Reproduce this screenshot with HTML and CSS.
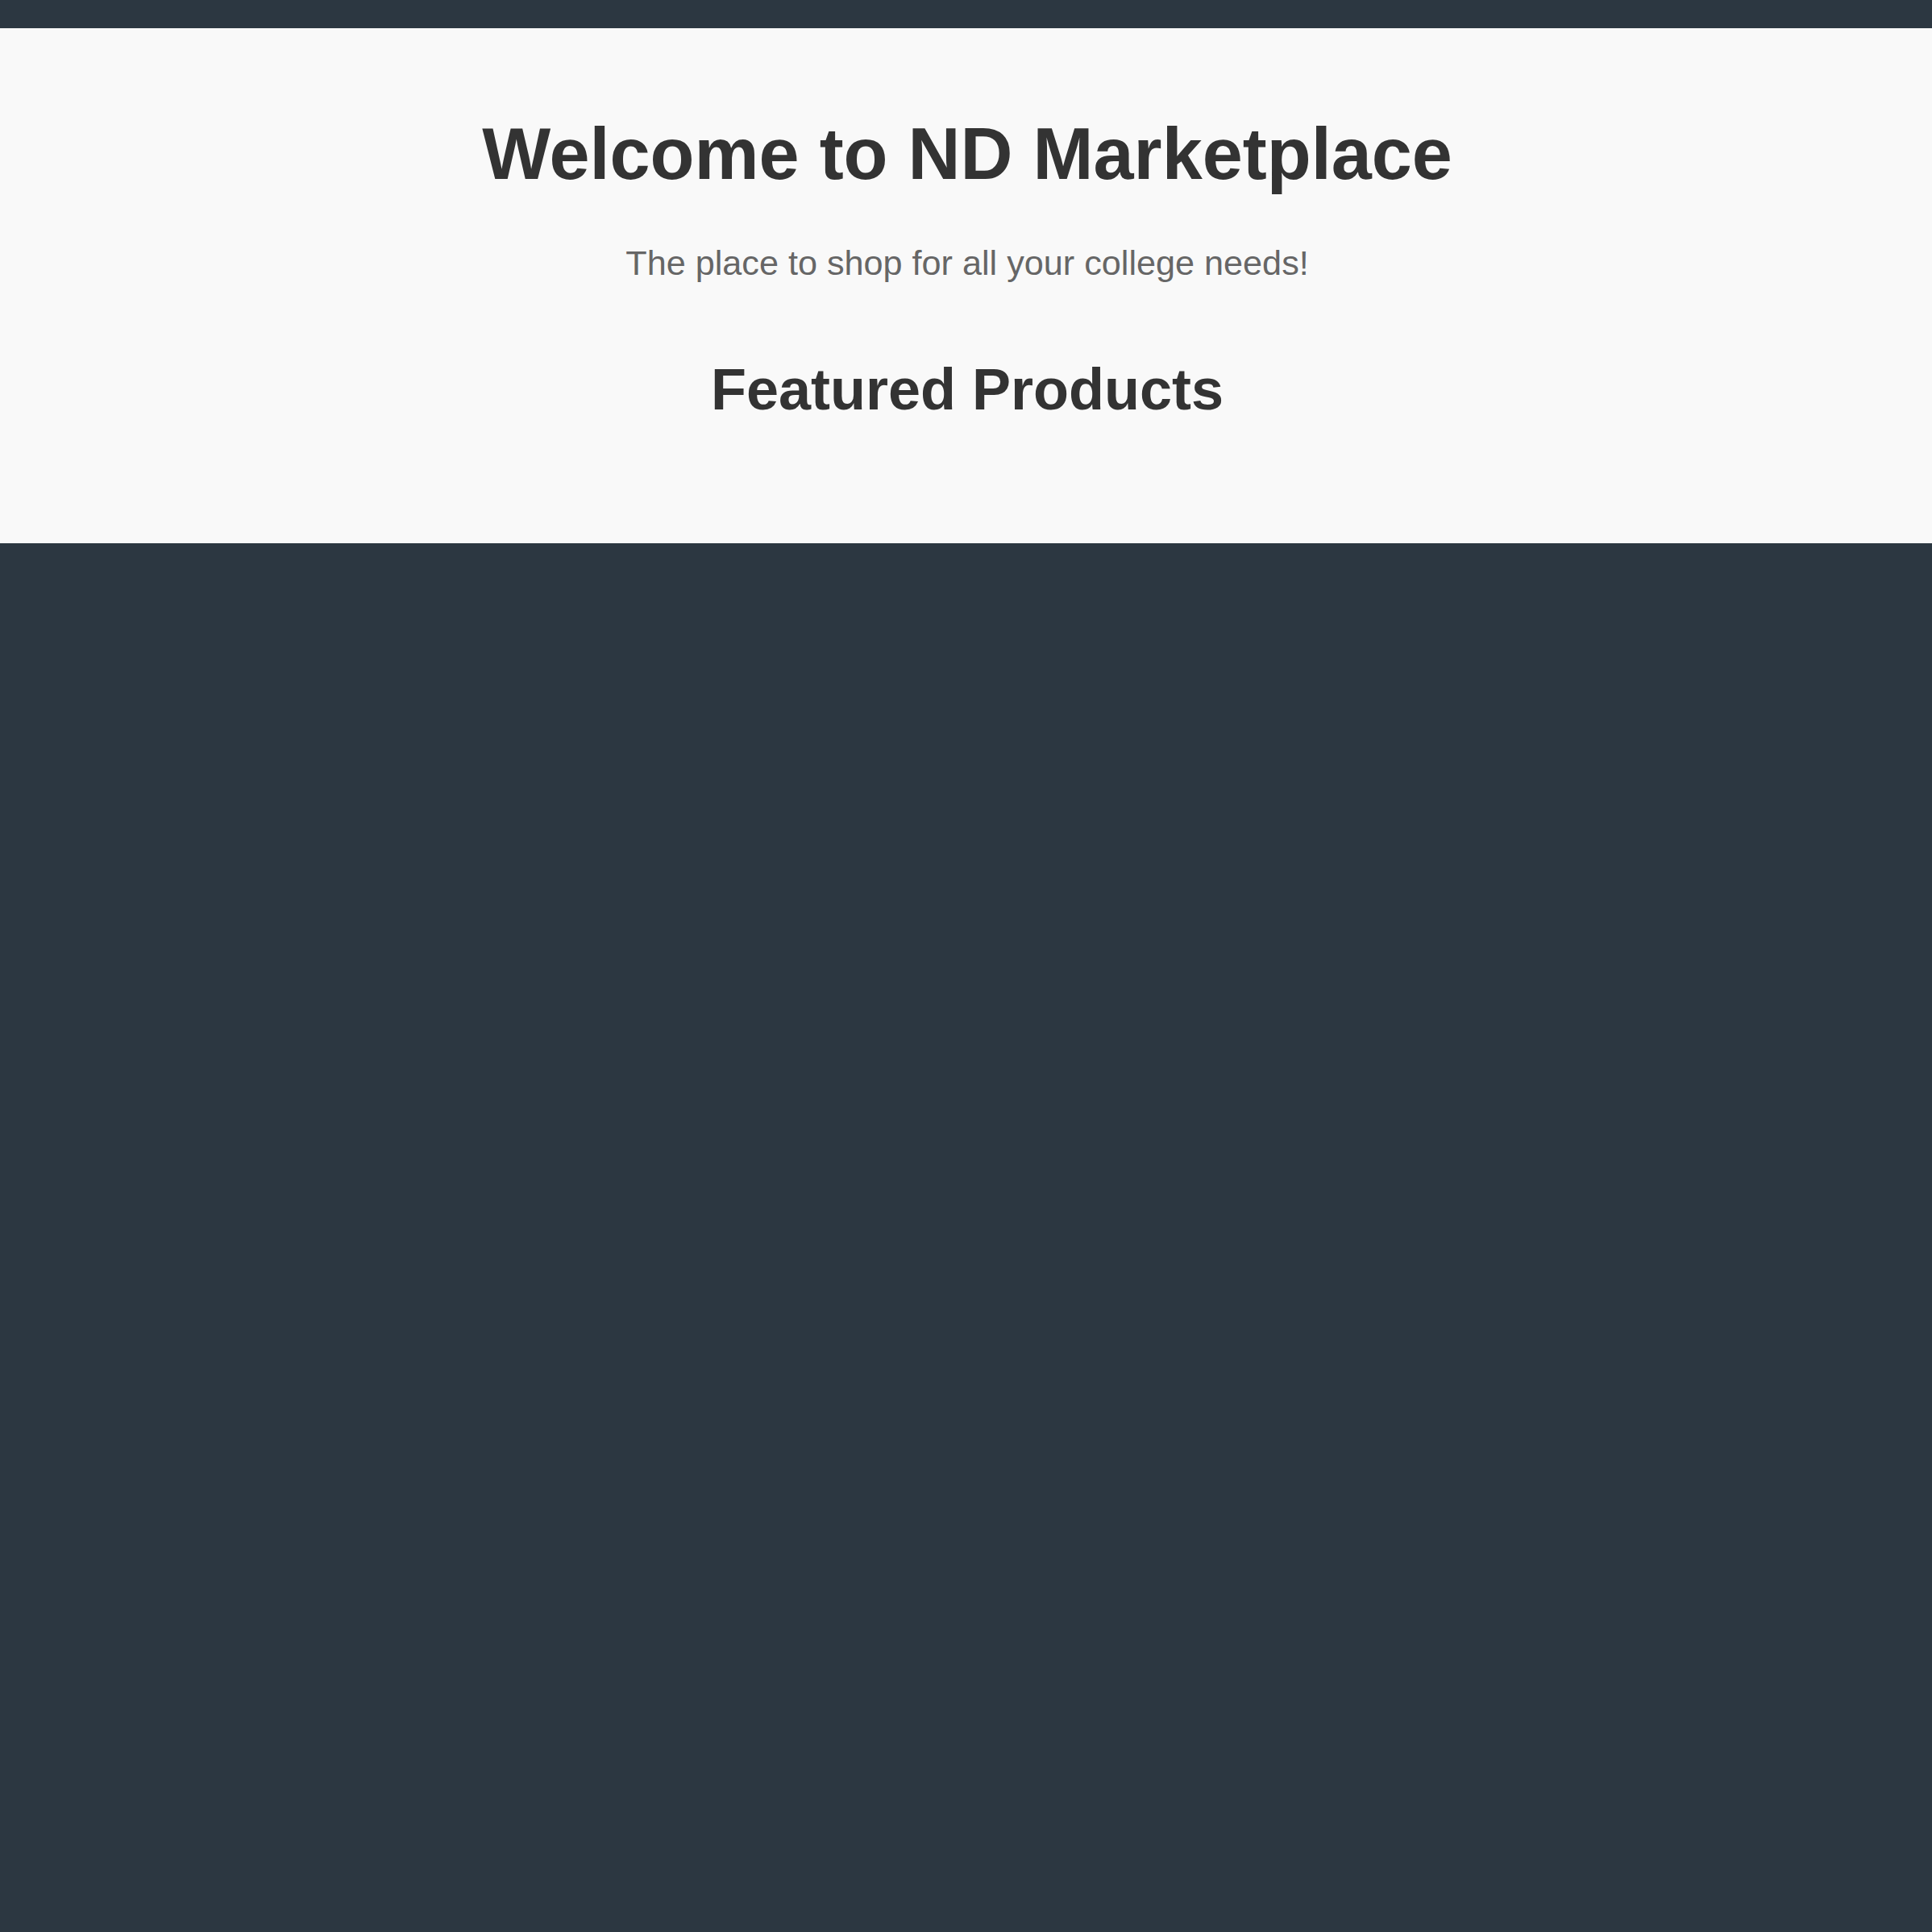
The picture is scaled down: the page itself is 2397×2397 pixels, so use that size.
FILE: index.html
```html
<!DOCTYPE html>
<html lang="en">
<head>
<meta charset="utf-8">
<title>ND Marketplace</title>
<link rel="stylesheet" href="styles.css">
</head>
<body>
<header class="topbar"></header>
<main class="hero">
  <h1 class="hero-title">Welcome to ND Marketplace</h1>
  <p class="hero-sub">The place to shop for all your college needs!</p>
  <h2 class="section-title">Featured Products</h2>
</main>
</body>
</html>
```
FILE: styles.css
```css
html, body {
  margin: 0;
  padding: 0;
}
body {
  background: #2c3741;
  font-family: "Liberation Sans", Arial, sans-serif;
}
.topbar {
  height: 35px;
  background: #2c3741;
}
.hero {
  background: #f9f9f9;
  text-align: center;
  padding: 105px 0 0 3px;
  height: 534px;
}
.hero-title {
  margin: 0 0 59px;
  font-size: 90px;
  font-weight: bold;
  line-height: normal;
  color: #333333;
}
.hero-sub {
  margin: 0 0 91px;
  font-size: 43.2px;
  line-height: normal;
  color: #666666;
}
.section-title {
  margin: 0;
  font-size: 72px;
  font-weight: bold;
  line-height: normal;
  color: #333333;
}
```
